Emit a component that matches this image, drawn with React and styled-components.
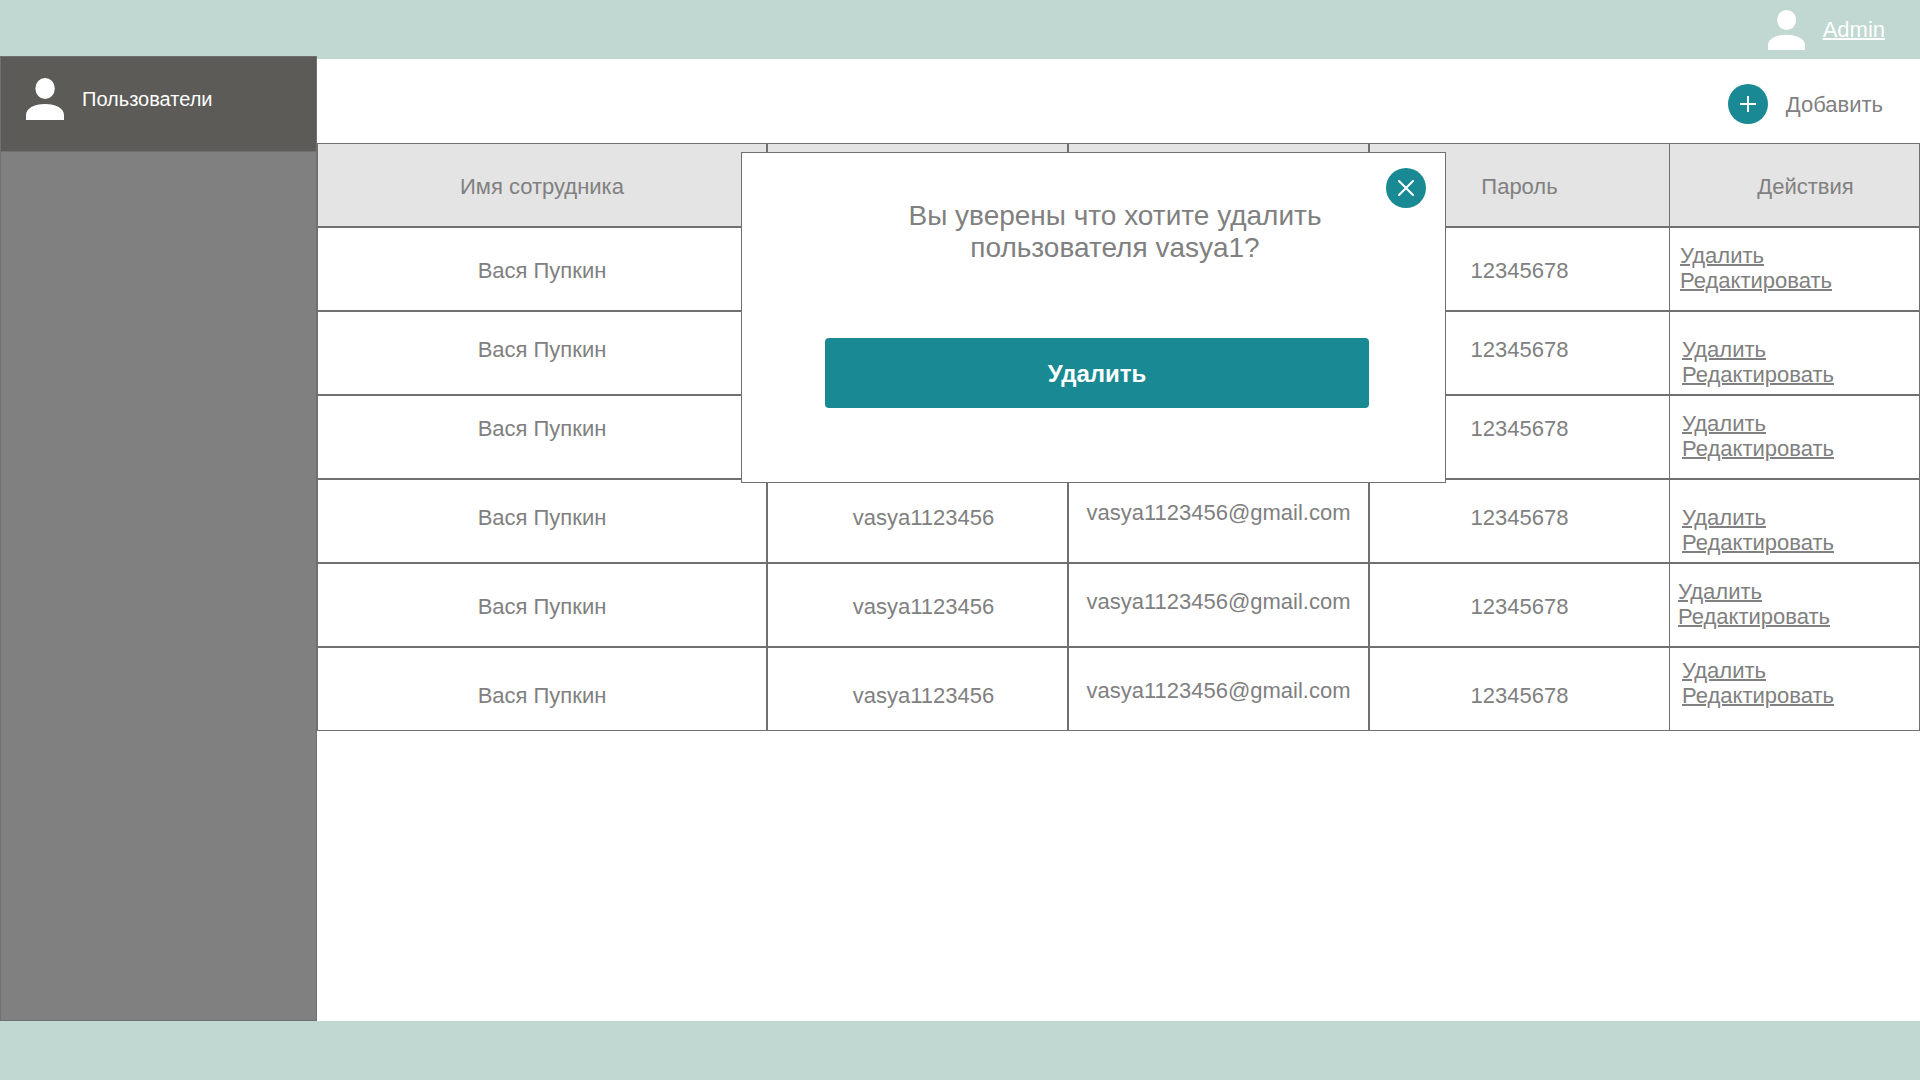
import React from "react";
import styled, { createGlobalStyle } from "styled-components";

const line = "#707070";
const mint = "#c0d8d1";
const teal = "#198a93";
const gray = "#808080";

const GlobalStyle = createGlobalStyle`
  * { box-sizing: border-box; }
  body {
    margin: 0;
    background: #fff;
    color: ${gray};
    font-family: "Liberation Sans", Arial, sans-serif;
    font-size: 22px;
    line-height: 25px;
  }
  button { font: inherit; cursor: pointer; }
`;

const Page = styled.div`
  min-height: 100vh;
  display: flex;
  flex-direction: column;
`;

const Header = styled.header`
  height: 59px;
  padding: 0 35px;
  display: flex;
  align-items: center;
  justify-content: flex-end;
  gap: 18px;
  background: ${mint};
`;

const AdminLink = styled.a`
  color: #fff;
  text-decoration: underline 2px;
`;

const Body = styled.div`
  flex: 1;
  display: flex;
`;

const Sidebar = styled.nav`
  flex: none;
  width: 317px;
  margin-top: -3px;
  background: ${gray};
  border: 1px solid ${line};
`;

const SidebarLink = styled.a`
  height: 95px;
  padding: 0 25px 10px;
  display: flex;
  align-items: center;
  gap: 18px;
  color: #fff;
  font-size: 20px;
  text-decoration: none;
  background: #5c5b57;
  border-bottom: 1px solid ${line};
`;

const Main = styled.main`
  position: relative;
  flex: 1;
  min-width: 0;
`;

const Toolbar = styled.div`
  height: 84px;
  padding: 6px 37px 0;
  display: flex;
  align-items: center;
  justify-content: flex-end;
`;

const AddButton = styled.button`
  padding: 0;
  display: flex;
  align-items: center;
  gap: 18px;
  color: ${gray};
  background: none;
  border: 0;
`;

const Disc = styled.span`
  width: 40px;
  height: 40px;
  display: grid;
  place-items: center;
  border-radius: 50%;
  background: ${teal};
`;

const Table = styled.table`
  width: 100%;
  table-layout: fixed;
  border-collapse: separate;
  border-spacing: 0;
`;

const Column = styled.col`
  width: ${(p) => (p.$width ? `${p.$width}px` : "auto")};
`;

const HeadCell = styled.th`
  height: 84px;
  padding: 30px 0 0 ${(p) => p.$left || 0}px;
  vertical-align: top;
  font-weight: normal;
  background: #e4e4e4;
  border: 1px solid ${line};
  &:last-child { border-left: 0; }
`;

const Cell = styled.td`
  height: 84px;
  padding: ${(p) => p.$top}px 0 0 ${(p) => p.$left || 0}px;
  vertical-align: top;
  text-align: center;
  border: 1px solid ${line};
  &:last-child {
    text-align: left;
    border-left: 0;
  }
`;

const ActionLink = styled.a`
  display: block;
  width: fit-content;
  color: ${gray};
  text-decoration: underline 2px;
`;

const Overlay = styled.div`
  position: absolute;
  top: 93px;
  left: 0;
  right: 0;
  padding-right: 50px;
  display: flex;
  justify-content: center;
`;

const Dialog = styled.section`
  position: relative;
  width: 705px;
  padding: 47px 76px 74px 83px;
  display: flex;
  flex-direction: column;
  gap: 74px;
  background: #fff;
  border: 1px solid ${line};
`;

const DialogTitle = styled.h2`
  margin: 0;
  padding-left: 36px;
  text-align: center;
  font-size: 28px;
  line-height: 32px;
  font-weight: normal;
`;

const ConfirmButton = styled.button`
  height: 70px;
  color: #fff;
  font-size: 24px;
  font-weight: bold;
  background: ${teal};
  border: 0;
  border-radius: 4px;
`;

const CloseButton = styled.button`
  position: absolute;
  top: 15px;
  right: 19px;
  padding: 0;
  background: none;
  border: 0;
`;

const Footer = styled.footer`
  height: 59px;
  background: ${mint};
`;

function PersonIcon({ width, height }) {
  return (
    <svg width={width} height={height} viewBox="0 0 38 42" preserveAspectRatio="none" fill="#fff" aria-hidden="true">
      <rect x="9.4" y="0" width="19.4" height="21" rx="9.7" ry="10.2" />
      <path d="M0 42V37C0 30.500 8 26 19 26S38 30.500 38 37V42Z" />
    </svg>
  );
}

function PlusIcon() {
  return (
    <svg width="16" height="16" viewBox="0 0 16 16" stroke="#fff" strokeWidth="2" aria-hidden="true">
      <path d="M8 0V16M0 8H16" />
    </svg>
  );
}

function CrossIcon() {
  return (
    <svg width="16" height="16" viewBox="0 0 16 16" stroke="#fff" strokeWidth="2" strokeLinecap="round" aria-hidden="true">
      <path d="M1 1L15 15M15 1L1 15" />
    </svg>
  );
}

const rows = [
  { id: 1, top: 30, actionsTop: 15, actionsLeft: 10 },
  { id: 2, top: 25, actionsTop: 25, actionsLeft: 12 },
  { id: 3, top: 20, actionsTop: 15, actionsLeft: 12 },
  { id: 4, top: 25, actionsTop: 25, actionsLeft: 12 },
  { id: 5, top: 30, actionsTop: 15, actionsLeft: 8 },
  { id: 6, top: 35, actionsTop: 10, actionsLeft: 12 },
];

export default function App() {
  return (
    <>
      <GlobalStyle />
      <Page>
        <Header>
          <PersonIcon width="37" height="40" />
          <AdminLink href="#admin">Admin</AdminLink>
        </Header>
        <Body>
          <Sidebar>
            <SidebarLink href="#users">
              <PersonIcon width="38" height="42" />
              Пользователи
            </SidebarLink>
          </Sidebar>
          <Main>
            <Toolbar>
              <AddButton type="button">
                <Disc><PlusIcon /></Disc>
                Добавить
              </AddButton>
            </Toolbar>
            <Table>
              <colgroup>
                <Column />
                <Column $width={301} />
                <Column $width={301} />
                <Column $width={301} />
                <Column $width={250} />
              </colgroup>
              <thead>
                <tr>
                  <HeadCell>Имя сотрудника</HeadCell>
                  <HeadCell />
                  <HeadCell />
                  <HeadCell>Пароль</HeadCell>
                  <HeadCell $left={22}>Действия</HeadCell>
                </tr>
              </thead>
              <tbody>
                {rows.map((row, i) => (
                  <tr key={row.id}>
                    <Cell $top={row.top}>Вася Пупкин</Cell>
                    <Cell $top={row.top} $left={12}>{i > 2 && "vasya1123456"}</Cell>
                    <Cell $top={row.top - 5}>{i > 2 && "vasya1123456@gmail.com"}</Cell>
                    <Cell $top={row.top}>12345678</Cell>
                    <Cell $top={row.actionsTop} $left={row.actionsLeft}>
                      <ActionLink href="#delete">Удалить</ActionLink>
                      <ActionLink href="#edit">Редактировать</ActionLink>
                    </Cell>
                  </tr>
                ))}
              </tbody>
            </Table>
            <Overlay>
              <Dialog role="dialog" aria-labelledby="dialog-title">
                <DialogTitle id="dialog-title">
                  Вы уверены что хотите удалить
                  <br />
                  пользователя vasya1?
                </DialogTitle>
                <ConfirmButton type="button">Удалить</ConfirmButton>
                <CloseButton type="button" aria-label="Закрыть">
                  <Disc><CrossIcon /></Disc>
                </CloseButton>
              </Dialog>
            </Overlay>
          </Main>
        </Body>
        <Footer />
      </Page>
    </>
  );
}
